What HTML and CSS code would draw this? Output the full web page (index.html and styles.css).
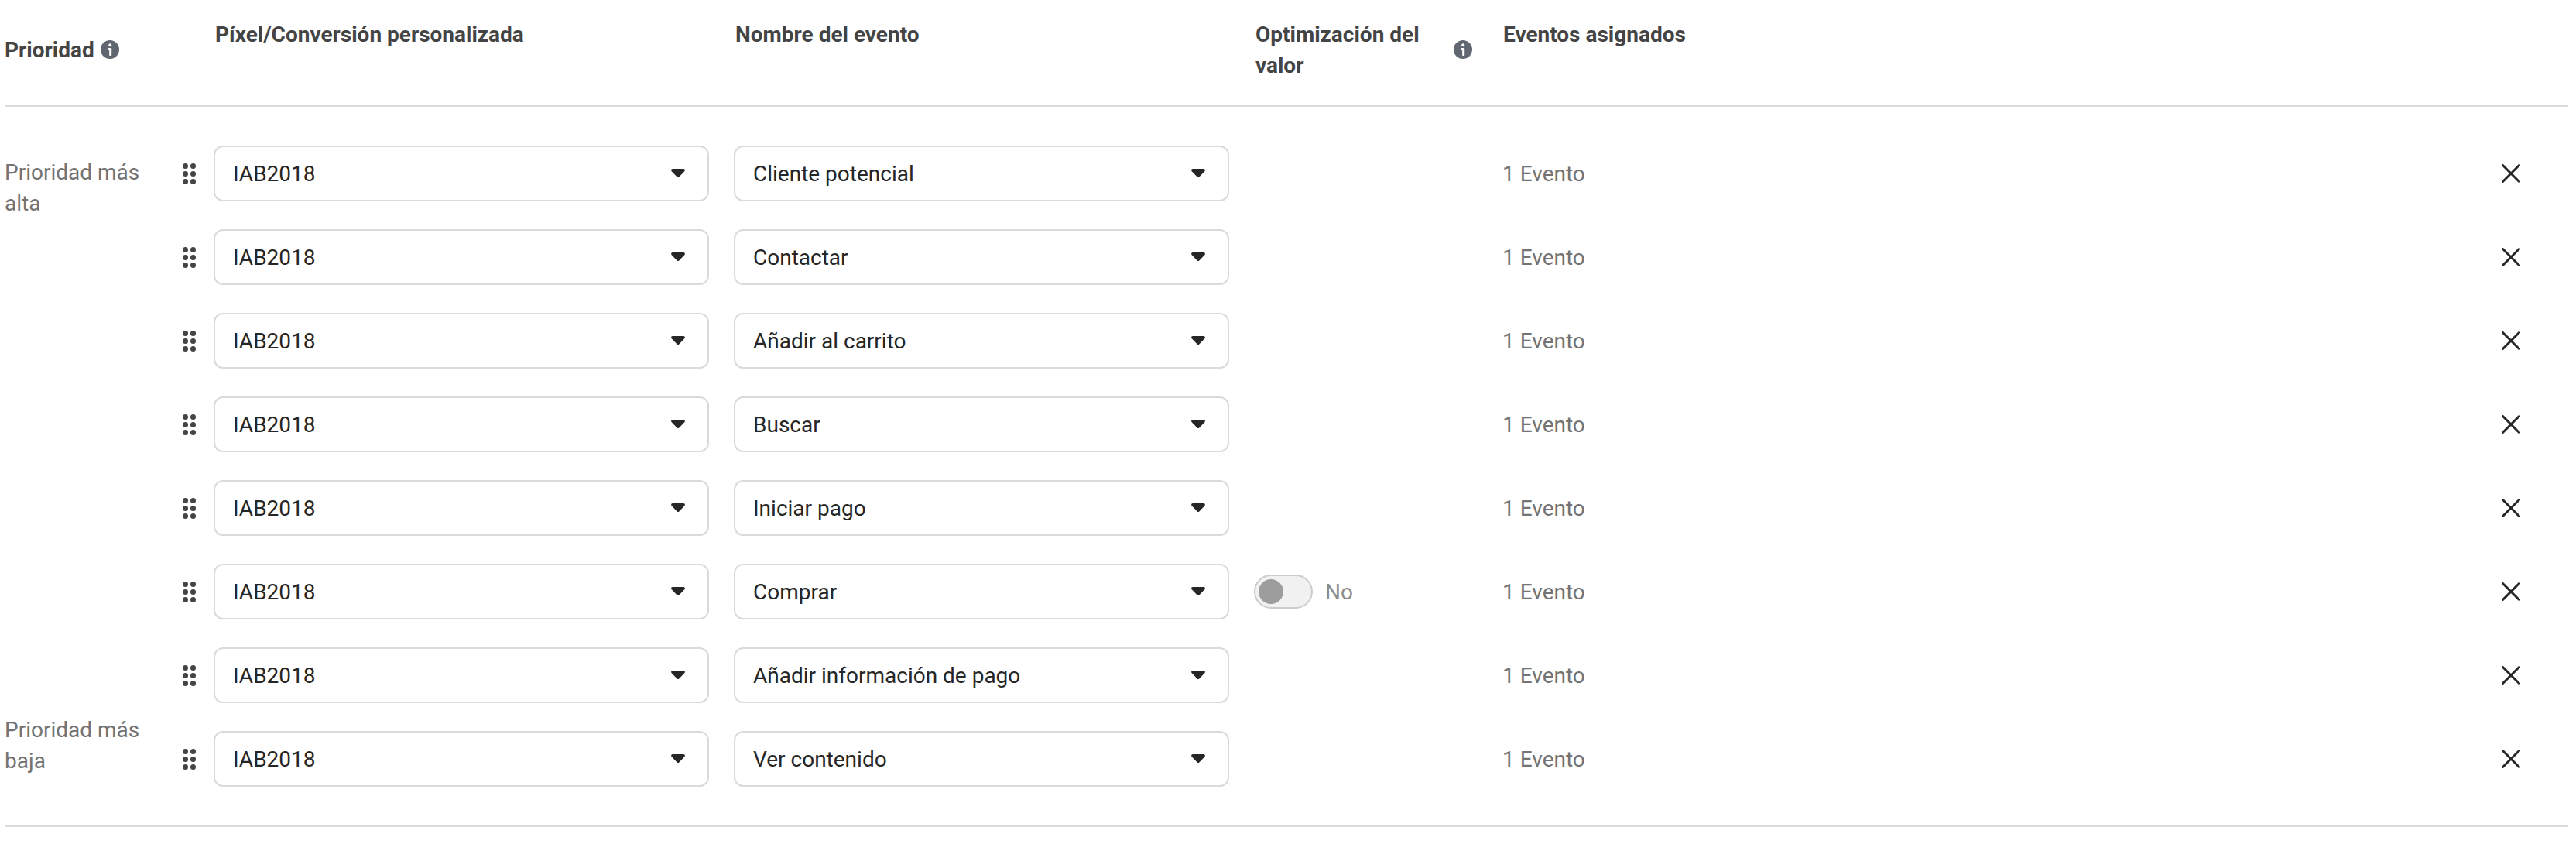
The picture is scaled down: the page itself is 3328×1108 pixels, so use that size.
FILE: index.html
```html
<!DOCTYPE html>
<html lang="es">
  <head>
    <meta charset="UTF-8" />
    <meta name="viewport" content="width=device-width, initial-scale=1.0" />
    <title>Eventos</title>
    <link rel="stylesheet" href="styles.css">
  </head>
  <body>
    <div class="events">
      <div class="grid head">
        <div class="th th-mid">
          <span>Prioridad</span>
          <svg class="info" viewBox="0 0 24 24">
            <circle cx="12" cy="12" r="12" />
            <circle class="info-i" cx="12.2" cy="6.2" r="2" />
            <path class="info-i" d="M10 10h3.2c.6 0 1 .4 1 1v8c0 .6-.4 1-1 1h-1c-.6 0-1-.4-1-1v-6.8H10c-1.2 0-1.2-2.2 0-2.2z" />
          </svg>
        </div>
        <div></div>
        <div class="th th-inset"><span>Píxel/Conversión personalizada</span></div>
        <div class="th th-inset"><span>Nombre del evento</span></div>
        <div class="th th-mid th-value">
          <span>Optimización del valor</span>
          <svg class="info" viewBox="0 0 24 24">
            <circle cx="12" cy="12" r="12" />
            <circle class="info-i" cx="12.2" cy="6.2" r="2" />
            <path class="info-i" d="M10 10h3.2c.6 0 1 .4 1 1v8c0 .6-.4 1-1 1h-1c-.6 0-1-.4-1-1v-6.8H10c-1.2 0-1.2-2.2 0-2.2z" />
          </svg>
        </div>
        <div class="th th-events"><span>Eventos asignados</span></div>
      </div>
      <div class="list" id="list"></div>
    </div>
    <script>
      const list = document.getElementById("list");
      const data = [
        { name: "Cliente potencial", label: "Prioridad más alta", pos: "top" },
        { name: "Contactar" },
        { name: "Añadir al carrito" },
        { name: "Buscar" },
        { name: "Iniciar pago" },
        { name: "Comprar", toggle: true },
        { name: "Añadir información de pago" },
        { name: "Ver contenido", label: "Prioridad más baja", pos: "bottom" },
      ];

      // desplegable
      const select = (text) => `
        <div class="select">
          <span>${text}</span>
          <svg class="caret" viewBox="0 0 18 12"><path d="M2 0h14c1.8 0 2.5 2 1.3 3.2l-7 7.2c-.8.8-1.8.8-2.6 0l-7-7.2C-.5 2 .2 0 2 0z" /></svg>
        </div>`;

      const toggle = `
        <div class="toggle"><div class="knob"></div></div>
        <span class="toggle-text">No</span>`;

      let rows = "";
      for (let row of data) {
        rows += `
          <div class="grid row">
            <div class="priority ${row.pos ?? ""}">${row.label ?? ""}</div>
            <div class="handle"><i></i><i></i><i></i><i></i><i></i><i></i></div>
            ${select("IAB2018")}
            ${select(row.name)}
            <div class="value">${row.toggle ? toggle : ""}</div>
            <div class="assigned">1 Evento</div>
            <svg class="close" viewBox="0 0 24 24"><path d="M1.5 1.5l21 21M22.5 1.5l-21 21" /></svg>
          </div>`;
      }
      list.innerHTML = rows;
    </script>
  </body>
</html>
```
FILE: styles.css
```css
body {
  margin: 0;
  background: #fff;
  color: #1c1e21;
  font-family: Roboto, "Liberation Sans", sans-serif;
  font-size: 28px;
  line-height: 40px;
}
.events {
  margin: 0 10px 0 6px;
}
.grid {
  display: grid;
  grid-template-columns: 230px 40px 672px 672px 321px 1fr 86px;
}
.head {
  box-sizing: border-box;
  height: 138px;
  padding-top: 24px;
  border-bottom: 2px solid #dadada;
  align-items: start;
}
.th {
  color: #444;
  font-weight: 700;
}
.th span {
  display: block;
  padding-top: 1px;
}
.th-inset {
  padding-left: 2px;
}
.th-mid {
  display: flex;
  align-items: center;
  gap: 8px;
  height: 80px;
}
.th-mid span {
  padding-top: 2px;
}
.th-value {
  justify-content: space-between;
  width: 280px;
  padding-left: 2px;
}
.th-value span {
  width: 240px;
}
.th-events {
  padding-left: 1px;
}
.info {
  width: 24px;
  height: 24px;
  fill: #606770;
}
.info-i {
  fill: #fff;
}
.list {
  padding: 32px 0;
  border-bottom: 2px solid #dadada;
}
.row {
  grid-template-rows: 108px;
  align-items: center;
}
.priority {
  width: 190px;
  color: #737373;
}
.top {
  align-self: start;
  padding-top: 33px;
}
.bottom {
  align-self: end;
  padding-bottom: 31px;
}
.handle {
  display: grid;
  grid-template-columns: 7px 7px;
  gap: 3px;
}
.handle i {
  width: 7px;
  height: 7px;
  border-radius: 50%;
  background: #444;
}
.select {
  display: flex;
  align-items: center;
  justify-content: space-between;
  box-sizing: border-box;
  width: 640px;
  height: 72px;
  padding: 0 29px 0 23px;
  border: 2px solid #dadada;
  border-radius: 12px;
  color: #262626;
}
.select span,
.assigned,
.toggle-text {
  padding-top: 2px;
}
.caret {
  width: 18px;
  height: 12px;
  fill: #262626;
}
.value {
  display: flex;
  align-items: center;
}
.toggle {
  box-sizing: border-box;
  width: 76px;
  height: 44px;
  padding: 4px;
  border: 2px solid #ccc;
  border-radius: 22px;
  background: #f1f1f1;
}
.knob {
  width: 32px;
  height: 32px;
  border-radius: 50%;
  background: #9d9d9d;
}
.toggle-text {
  margin-left: 16px;
  color: #8c8c8c;
}
.assigned {
  color: #737373;
}
.close {
  width: 24px;
  height: 24px;
  fill: none;
  stroke: #262626;
  stroke-width: 3;
  stroke-linecap: round;
}
```
